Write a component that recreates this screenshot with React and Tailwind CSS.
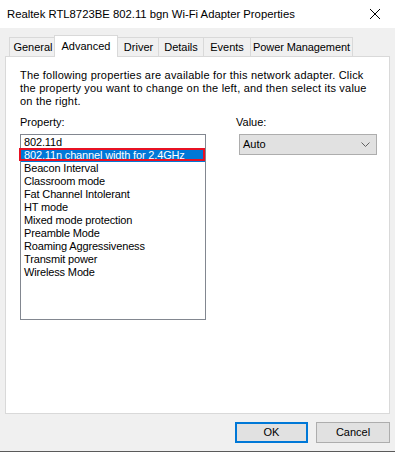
import React from "react";

const items = [
  "802.11d",
  "802.11n channel width for 2.4GHz",
  "Beacon Interval",
  "Classroom mode",
  "Fat Channel Intolerant",
  "HT mode",
  "Mixed mode protection",
  "Preamble Mode",
  "Roaming Aggressiveness",
  "Transmit power",
  "Wireless Mode",
];

export default function App() {
  return (
    <div
      className="w-[395px] h-[452px] bg-[#f0f0f0] flex flex-col text-black border-b border-[#5a5a5a] overflow-hidden"
      style={{ fontFamily: '"Liberation Sans", Arial, sans-serif' }}
    >
      {/* Title bar */}
      <div className="h-[28px] bg-white flex items-center pl-[7px] pr-[8px] shrink-0">
        <div className="text-[11.3px] leading-[16px] flex-1">
          Realtek RTL8723BE 802.11 bgn Wi-Fi Adapter Properties
        </div>
        <svg width="12" height="12" viewBox="0 0 12 12" className="mr-[6px]">
          <path d="M1 1 L11 11 M11 1 L1 11" stroke="#000" strokeWidth="1" fill="none" />
        </svg>
      </div>

      <div className="flex flex-col px-[5px] pt-[7px] flex-1">
        {/* Tabs */}
        <div className="h-[21px] flex items-end pl-[4px] text-[11px]">
          <div className="w-[47px] h-[19px] border-l border-t border-[#d9d9d9] bg-[#f0f0f0] flex items-center justify-center">
            General
          </div>
          <div className="relative z-10 w-[64px] -mx-[2px] h-[22px] -mb-[1px] border-l border-t border-r border-[#d9d9d9] bg-white flex items-start justify-center pt-[2px]">
            Advanced
          </div>
          <div className="w-[42px] h-[19px] border-l border-t border-[#d9d9d9] bg-[#f0f0f0] flex items-center justify-center pl-[2px]">
            Driver
          </div>
          <div className="w-[45px] h-[19px] border-l border-t border-[#d9d9d9] bg-[#f0f0f0] flex items-center justify-center">
            Details
          </div>
          <div className="w-[47px] h-[19px] border-l border-t border-[#d9d9d9] bg-[#f0f0f0] flex items-center justify-center">
            Events
          </div>
          <div className="w-[103px] h-[19px] border-l border-t border-r border-[#d9d9d9] bg-[#f0f0f0] flex items-center justify-center tracking-[-0.1px]">
            Power Management
          </div>
        </div>

        {/* Panel */}
        <div className="h-[358px] bg-white border border-[#d9d9d9] pl-[14px] pt-[12px] text-[11px] leading-[13px]">
          <p className="tracking-[0.2px]">
            The following properties are available for this network adapter. Click
            <br />
            the property you want to change on the left, and then select its value
            <br />
            on the right.
          </p>
          <div className="flex mt-[8px]">
            <div className="w-[186px] flex flex-col">
              <div className="h-[13px]">Property:</div>
              <div className="mt-[5px] h-[186px] border border-[#828790] bg-white pt-[1px] tracking-[-0.15px]">
                {items.map((it, i) =>
                  i === 1 ? (
                    <div key={it} className="relative h-[13px] bg-[#0078d7] text-white pl-[3px] whitespace-nowrap">
                      {it}
                      <span className="absolute -left-[2px] right-0 -top-[1px] h-[13px] border-2 border-[#e81123]" />
                    </div>
                  ) : (
                    <div key={it} className="h-[13px] pl-[3px] whitespace-nowrap">
                      {it}
                    </div>
                  )
                )}
              </div>
            </div>
            <div className="ml-[30px] flex flex-col">
              <div className="h-[13px]">Value:</div>
              <div className="ml-[3px] mt-[5px] w-[138px] h-[21px] bg-[#e1e1e1] border border-[#adadad] flex items-center pl-[3px] pr-[6px]">
                <span className="flex-1">Auto</span>
                <svg width="9" height="5" viewBox="0 0 9 5">
                  <path d="M0.5 0.5 L4.5 4.5 L8.5 0.5" stroke="#606060" strokeWidth="1" fill="none" />
                </svg>
              </div>
            </div>
          </div>
        </div>

        {/* Buttons */}
        <div className="flex justify-end gap-[8px] mt-[8px] text-[11px]">
          <button className="w-[73px] h-[21px] bg-[#e1e1e1] border-2 border-[#0078d7] flex items-center justify-center">
            OK
          </button>
          <button className="w-[74px] h-[21px] bg-[#e1e1e1] border border-[#adadad] flex items-center justify-center">
            Cancel
          </button>
        </div>
      </div>
    </div>
  );
}
